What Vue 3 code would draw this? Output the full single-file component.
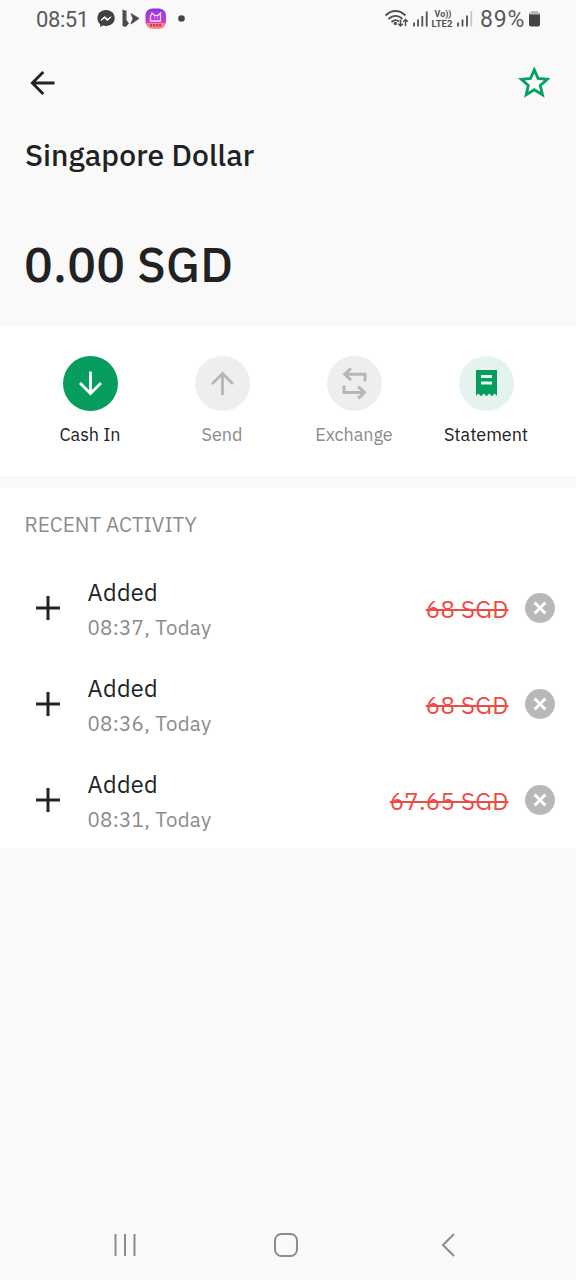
<script setup>
const actions = [
  { label: 'Cash In', kind: 'cash' },
  { label: 'Send', kind: 'send' },
  { label: 'Exchange', kind: 'exchange' },
  { label: 'Statement', kind: 'statement' },
]
const rows = [
  { title: 'Added', time: '08:37, Today', amount: '68 SGD' },
  { title: 'Added', time: '08:36, Today', amount: '68 SGD' },
  { title: 'Added', time: '08:31, Today', amount: '67.65 SGD' },
]
</script>

<template>
  <div class="screen">
    <div class="status">
      <span class="clock">08:51</span>
      <svg class="notes" width="94" height="24" viewBox="0 0 94 24">
        <path d="M10 3C4.700 3 1.500 6.600 1.500 11.200c0 2.500 1 4.500 2.700 6V20l2.700-1.500c1 .3 2 .5 3.100.5 5.300 0 8.700-3.400 8.700-7.900S15.300 3 10 3z" fill="#414141" />
        <path d="M5 13.300l3.500-3.700 3.200 2.500 3.400-2.300-3.500 3.800-3.200-2.500z" fill="#fff" stroke="#fff" />
        <path d="M26.500 2.500l4 1.500v9l2.500 3.500-3.500 3.500-3-1z" fill="#4b4b4b" />
        <path d="M35 6.500l8 4.900-8 5.600 2-5.600z" fill="#4b4b4b" stroke="#4b4b4b" stroke-width=".8" />
        <path d="M30 3v12" stroke="#999" stroke-dasharray="1 2" />
        <defs>
          <linearGradient id="badge" x1="0" y1="0" x2="0" y2="1">
            <stop offset="0" stop-color="#8c35e4" />
            <stop offset=".65" stop-color="#c43cd2" />
            <stop offset="1" stop-color="#ff5978" />
          </linearGradient>
        </defs>
        <rect x="49.500" y="1.500" width="20.500" height="20" rx="7" fill="url(#badge)" />
        <path d="M54.500 14V9.500l1.500-3.500 2.500 2.500h3.500L64.500 6v8zM58 11h.6m2.800 0h.6" fill="none" stroke="#f7d9ff" stroke-width="1.300" />
        <path d="M50.500 16h18.500c0 3-1.500 5.500-5 5.500h-8c-4 0-5.500-2.500-5.500-5.500z" fill="#ff8480" />
        <path d="M54 18.300h11.500" stroke="#c5405a" stroke-width="2.400" stroke-dasharray="2.200 .8" />
        <circle cx="85.500" cy="11.500" r="3.300" fill="#444" />
      </svg>
      <svg class="radio" width="90" height="24" viewBox="0 0 90 24">
        <g fill="none" stroke="#505050" stroke-width="1.800">
          <path d="M1.500 8.500c6-6 14-6 20 0M4.500 12c4.500-4.300 10-4.300 14 0M7.500 15c3-2.600 5-2.600 7.500-.5" />
          <path d="M16.500 12.500v6.500m-2.300-2.300 2.300 2.300 2.300-2.300M21.500 19v-6.500m-2.300 2.300 2.300-2.300 2.300 2.300" stroke-width="1.500" />
          <path d="M30 15.500V19.500M34 12.500V19.500M38.300 9V19.500M42.700 4.500V19.500M74 15.500V19.500M78.500 12.500V19.500M83 8.500V19.500" />
          <path d="M87.300 4V19.500" stroke="#c5c5c5" />
        </g>
        <circle cx="11.300" cy="16.500" r="1.700" fill="#505050" />
        <text class="volte" x="50.500" y="9.500" textLength="17" lengthAdjust="spacingAndGlyphs">Vo))</text>
        <text class="volte" x="47.500" y="20" textLength="21" lengthAdjust="spacingAndGlyphs">LTE2</text>
      </svg>
      <span class="percent">89%</span>
      <svg class="battery" width="13" height="18" viewBox="0 0 13 18">
        <path d="M3 1h7v1.500h2v3.500H1V2.500h2z" fill="#b9b9b9" />
        <path d="M1 4.500h11v10a2 2 0 0 1-2 2H3a2 2 0 0 1-2-2z" fill="#444" />
      </svg>
    </div>

    <header class="head">
      <div class="bar">
        <svg class="back" width="26" height="26" viewBox="0 0 26 26" fill="none" stroke="#202223" stroke-width="2.800">
          <path d="M24.500 13H2M13.300 2L2.300 13l11 11" />
        </svg>
        <svg width="32" height="32" viewBox="0 0 32 32">
          <path d="M16.300 3.900l3.800 8.600 9.100.8-6.900 6.200 2.100 9.200-8.100-4.900-8.100 4.900 2.100-9.200-6.900-6.200 9.100-.8z" fill="none" stroke="#08a163" stroke-width="2.900" />
        </svg>
      </div>
      <h1>Singapore Dollar</h1>
      <div class="balance">0.00 SGD</div>
    </header>

    <section class="actions">
      <div v-for="a in actions" :key="a.kind" class="action" :class="a.kind">
        <div class="disc">
          <svg v-if="a.kind === 'cash'" width="55" height="55" viewBox="0 0 55 55" fill="none" stroke="#fff" stroke-width="2.800">
            <path d="M27.500 15.500v22M17 27l10.500 10.500L38 27" />
          </svg>
          <svg v-else-if="a.kind === 'send'" width="55" height="55" viewBox="0 0 55 55" fill="none" stroke="#b5b6b6" stroke-width="2.800">
            <path d="M27.500 39V17M17 28l10.500-10.500L38 28" />
          </svg>
          <svg v-else-if="a.kind === 'exchange'" width="55" height="55" viewBox="0 0 55 55" fill="none" stroke="#b7b7b7" stroke-width="3">
            <path d="M38 25.500v-7.300H18M24 12.300l-6.200 5.900 6.200 5.900M17 29.500v7h20.500M31.300 30.600l6.200 5.900-6.200 5.900" />
          </svg>
          <svg v-else width="55" height="55" viewBox="0 0 55 55">
            <path d="M17 14h21v26l-2.300-2.500-2.800 2.800-2.700-2.800-2.700 2.800-2.700-2.800-2.700 2.800-2.800-2.800-2.300 2.500z" fill="#079d5e" />
            <path d="M22 20.500h11M22 27h11" stroke="#e5f6ef" stroke-width="3" />
          </svg>
        </div>
        <span class="label">{{ a.label }}</span>
      </div>
    </section>

    <section class="activity">
      <h2>RECENT ACTIVITY</h2>
      <div v-for="r in rows" :key="r.time" class="row">
        <svg class="plus" width="24" height="24" viewBox="0 0 24 24" stroke="#202223" stroke-width="3">
          <path d="M12 0v24M0 12h24" />
        </svg>
        <div class="info">
          <div class="title">{{ r.title }}</div>
          <div class="time">{{ r.time }}</div>
        </div>
        <div class="amount">{{ r.amount }}</div>
        <svg class="failed" width="30" height="30" viewBox="0 0 30 30">
          <circle cx="15" cy="15" r="15" fill="#b7b9b7" />
          <path d="M9.500 9.500l11 11M20.500 9.500l-11 11" stroke="#fff" stroke-width="3" />
        </svg>
      </div>
    </section>

    <nav class="nav">
      <svg width="346" height="26" viewBox="0 0 346 26" fill="none" stroke="#8c8c8c" stroke-width="2">
        <path d="M2.500 2v22M12 2v22M21.500 2v22" />
        <rect x="162" y="2" width="22" height="22" rx="6.500" />
        <path d="M341 2l-11 11 11 11" />
      </svg>
    </nav>
  </div>
</template>

<style>
body { margin: 0; background: #f9f9f9; }
</style>

<style scoped>
.screen {
  width: 576px; height: 1280px; box-sizing: border-box; overflow: hidden;
  display: flex; flex-direction: column; background: #f9f9f9; color: #202223;
  font-family: "IBM Plex Sans", "Noto Sans", sans-serif;
}
.status { height: 40px; display: flex; align-items: flex-start; padding-left: 36px; color: #5a5a5a; font-family: Roboto, sans-serif; }
.clock { width: 60px; font-size: 22px; line-height: 39px; letter-spacing: -.4px; white-space: nowrap; }
.notes { margin-top: 7px; }
.radio { margin: 7px 0 0 194px; }
.percent { margin-left: 6px; width: 48px; font-size: 23px; line-height: 39px; letter-spacing: .8px; white-space: nowrap; }
.battery { margin-top: 10px; }
.volte { font: bold 9px Roboto, sans-serif; fill: #555; }
.head { height: 286px; box-sizing: border-box; padding: 26px 25px 0 24px; }
.bar { height: 32px; display: flex; justify-content: space-between; align-items: center; padding: 0 1px 0 6px; }
.back { margin-top: 2px; }
h1 { margin: 35px 0 0 1px; font-size: 30px; line-height: 44px; font-weight: 500; letter-spacing: .1px; white-space: nowrap; }
.balance { margin-top: 47px; font-size: 48px; line-height: 80px; font-weight: 500; letter-spacing: .3px; white-space: nowrap; }
.actions { height: 150px; box-sizing: border-box; padding: 30px 24px 0; display: grid; grid-template-columns: repeat(4, 132px); background: #fff; }
.action { display: flex; flex-direction: column; align-items: center; }
.disc { width: 55px; height: 55px; border-radius: 50%; background: #eee; }
.disc svg { display: block; }
.cash .disc { background: #079d5e; }
.statement .disc { background: #e4f3ee; }
.label { margin-top: 11px; font-size: 18px; line-height: 26px; letter-spacing: -.05px; white-space: nowrap; }
.send .label, .exchange .label { color: #8b8b8b; }
.activity { margin-top: 12px; height: 360px; box-sizing: border-box; background: #fff; }
h2 { margin: 0; height: 72px; padding-left: 24.5px; font-size: 20.7px; line-height: 74px; font-weight: 400; color: #8b8b8b; white-space: nowrap; }
.row { height: 96px; display: flex; align-items: center; padding: 0 21px 0 36px; }
.info { margin-left: 27.5px; padding-top: 7px; flex: 1; }
.title { font-size: 23.5px; line-height: 33px; letter-spacing: .35px; }
.time { font-size: 20.5px; line-height: 38px; color: #8b8b8b; letter-spacing: .3px; }
.amount { color: #ec4c43; font-size: 24px; line-height: 34px; padding-top: 1px; letter-spacing: .25px; text-decoration: line-through; text-decoration-thickness: 1.5px; margin-right: 16.5px; white-space: nowrap; }
.nav { margin-top: auto; height: 48px; padding-left: 113px; }
</style>
